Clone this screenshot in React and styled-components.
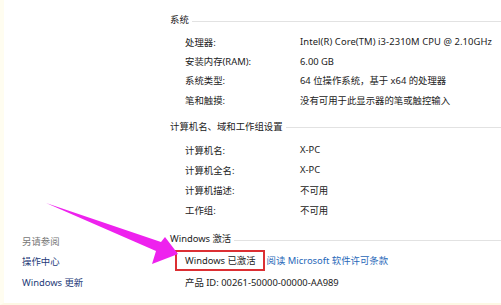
import styled, { createGlobalStyle } from "styled-components";

const GlobalStyle = createGlobalStyle`
  html, body {
    margin: 0;
    padding: 0;
    background: #ffffff;
  }
  body {
    font-family: "Noto Sans", "Noto Sans CJK SC", sans-serif;
    font-size: 9.4px;
    color: #222222;
  }
`;

const systemRows = [
  ["处理器:", "Intel(R) Core(TM) i3-2310M CPU @ 2.10GHz"],
  ["安装内存(RAM):", "6.00 GB"],
  ["系统类型:", "64 位操作系统，基于 x64 的处理器"],
  ["笔和触摸:", "没有可用于此显示器的笔或触控输入"],
];

const computerRows = [
  ["计算机名:", "X-PC"],
  ["计算机全名:", "X-PC"],
  ["计算机描述:", "不可用"],
  ["工作组:", "不可用"],
];

const App = () => {
  return (
    <>
      <GlobalStyle />
      <Page>
        <Sidebar>
          <SideTitle>另请参阅</SideTitle>
          <SideLink>操作中心</SideLink>
          <SideLink>Windows 更新</SideLink>
        </Sidebar>

        <Main>
          <Section $top={10}>
            <Header>系统</Header>
            <Rows $top={2}>
              {systemRows.map(([k, v]) => (
                <Row key={k} $h={19.4}>
                  <Label>{k}</Label>
                  <Value $wide={k === "处理器:"}>{v}</Value>
                </Row>
              ))}
            </Rows>
          </Section>

          <Section $top={7}>
            <Header>计算机名、域和工作组设置</Header>
            <Rows $top={3}>
              {computerRows.map(([k, v]) => (
                <Row key={k} $h={20.2}>
                  <Label>{k}</Label>
                  <Value>{v}</Value>
                </Row>
              ))}
            </Rows>
          </Section>

          <Section $top={9}>
            <Header>Windows 激活</Header>
            <ActivationRow>
              <Activated>Windows 已激活</Activated>
              <Link>阅读 Microsoft 软件许可条款</Link>
            </ActivationRow>
            <Row $h={22}>产品 ID: 00261-50000-00000-AA989</Row>
          </Section>
        </Main>

        <Arrow viewBox="0 0 501 305" width="501" height="305">
          <polygon
            points="46,203 161,242 165,237 178,254 152,264 156,251"
            fill="#ee22ee"
          />
        </Arrow>
      </Page>
    </>
  );
};

export default App;

const Page = styled.div`
  position: relative;
  width: 501px;
  height: 305px;
  display: flex;
  box-sizing: border-box;
  border-left: 4px solid #fffdf0;
  border-bottom: 2px solid #fdf8e4;
  overflow: hidden;
`;

const Sidebar = styled.div`
  width: 148px;
  padding-left: 18px;
  padding-bottom: 10px;
  display: flex;
  flex-direction: column;
  justify-content: flex-end;
`;

const SideTitle = styled.div`
  color: #767676;
  line-height: 20px;
`;

const SideLink = styled.div`
  color: #1e3a78;
  line-height: 20.5px;
`;

const Main = styled.div`
  flex: 1;
  display: flex;
  flex-direction: column;
`;

const Section = styled.div`
  margin-top: ${(p) => p.$top}px;
  display: flex;
  flex-direction: column;
`;

const Header = styled.div`
  display: flex;
  align-items: center;
  line-height: 20px;

  &::after {
    content: "";
    flex: 1;
    height: 1px;
    margin-left: 3px;
    margin-top: 2px;
    background: #e2e2e2;
  }
`;

const Rows = styled.div`
  margin-top: ${(p) => p.$top}px;
  display: flex;
  flex-direction: column;
`;

const Row = styled.div`
  display: flex;
  align-items: center;
  height: ${(p) => p.$h}px;
  padding-left: 15px;
`;

const Label = styled.div`
  width: 115px;
  flex-shrink: 0;
`;

const Value = styled.div`
  white-space: nowrap;
  letter-spacing: ${(p) => (p.$wide ? "0.1px" : "0")};
`;

const ActivationRow = styled.div`
  display: flex;
  align-items: center;
  padding-left: 5px;
  height: 22px;
`;

const Activated = styled.div`
  border: 2px solid #dc2f33;
  padding: 0 7px 0 8px;
  line-height: 17px;
  height: 17px;
`;

const Link = styled.div`
  margin-left: 2px;
  color: #1f67b8;
`;

const Arrow = styled.svg`
  position: absolute;
  left: -4px;
  top: 0;
  pointer-events: none;
`;
